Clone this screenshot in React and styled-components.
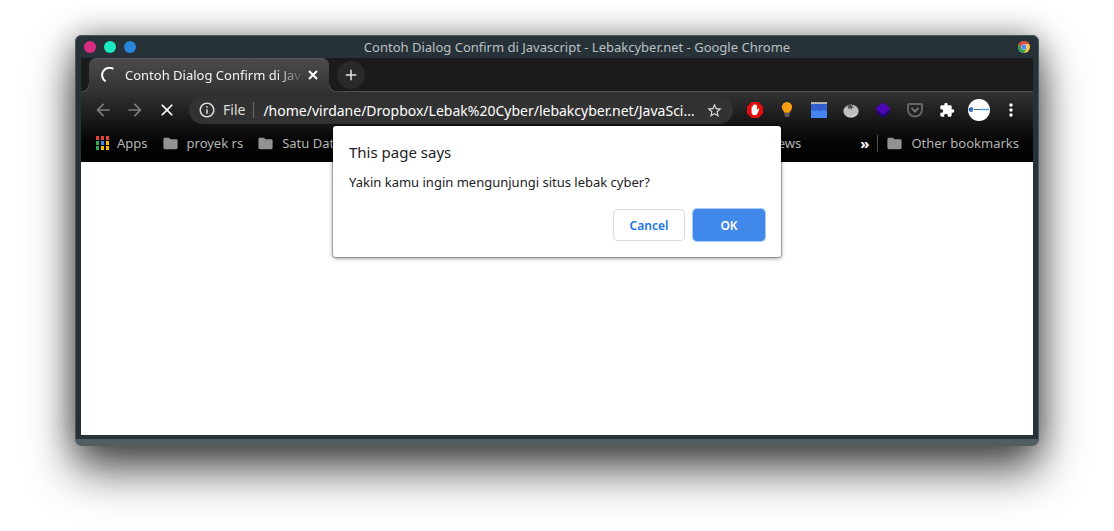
import React from "react";
import styled, { createGlobalStyle } from "styled-components";
import {
  MdArrowBack,
  MdArrowForward,
  MdClose,
  MdAdd,
  MdInfoOutline,
  MdStarBorder,
  MdExtension,
  MdMoreVert,
  MdFolder,
} from "react-icons/md";

const appDots = [
  "#ea4335", "#ea4335", "#ea4335",
  "#34a853", "#4285f4", "#fbbc05",
  "#34a853", "#fbbc05", "#fbbc05",
];

function AppsIcon() {
  return (
    <svg width="14" height="14" viewBox="0 0 14 14">
      {appDots.map((color, i) => (
        <rect
          key={i}
          x={(i % 3) * 5 + 1}
          y={Math.floor(i / 3) * 5}
          width="3"
          height="4"
          fill={color}
        />
      ))}
    </svg>
  );
}

function ChromeLogo() {
  return (
    <svg width="12" height="12" viewBox="0 0 24 24">
      <circle cx="12" cy="12" r="12" fill="#fbc34a" />
      <path d="M12 12 1.6 6A12 12 0 0 0 12 24l5.2-9z" fill="#2f9e58" />
      <path d="M1.6 6A12 12 0 0 1 22.4 6H12l-5.2 9z" fill="#dd4b3e" />
      <circle cx="12" cy="12" r="5.6" fill="#e6eefc" />
      <circle cx="12" cy="12" r="4.8" fill="#4a8af4" />
    </svg>
  );
}

function Spinner() {
  return (
    <svg width="16" height="16" viewBox="0 0 16 16" fill="none">
      <path
        d="M13.300 1.800A6.800 6.800 0 0 0 5.600 14.300"
        stroke="#fff"
        strokeWidth="2"
      />
    </svg>
  );
}

function TabCloseIcon() {
  return (
    <svg width="14" height="14" viewBox="0 0 14 14">
      <path d="m3 3 8 8m0-8-8 8" stroke="#fff" strokeWidth="2" />
    </svg>
  );
}

function BlockerIcon() {
  return (
    <svg width="16" height="16" viewBox="0 0 16 16">
      <path d="M4.7 0h6.6L16 4.7v6.6L11.3 16H4.7L0 11.3V4.7z" fill="#e40d0d" />
      <path
        d="M4.6 9V5.2c0-1 1.3-1 1.3 0V3.6c0-1 1.4-1 1.4 0V3c0-1 1.4-1 1.4 0v.8c0-1 1.4-.9 1.4 0v4.4l.8-1.3c.6-.7 1.5-.3 1.2.5l-1.7 4.2c-.5 1.2-1.2 1.700-2.600 1.700-2 0-3.200-1.300-3.200-3z"
        fill="#fff"
      />
    </svg>
  );
}

function BulbIcon() {
  return (
    <svg width="16" height="16" viewBox="0 0 16 16">
      <path
        d="M8 0a5.2 5.2 0 0 0-5.2 5.3c0 2.4 2.2 3.6 2.6 5.4h5.2c.4-1.8 2.6-3 2.6-5.4A5.2 5.2 0 0 0 8 0z"
        fill="#f79d13"
      />
      <path d="M5.5 11h5v2.6L9.5 15h-3l-1-1.4z" fill="#5c5c5c" />
    </svg>
  );
}

function NotesIcon() {
  return (
    <svg width="16" height="16" viewBox="0 0 16 16">
      <path fill="#4384f0" d="M0 2h16v14H0z" />
      <path fill="#315fd0" d="M0 2h16v7l-3-1-3 1-4-1-3 1-3-1z" />
      <path fill="#b9b9b4" d="M0 0h16v2H0z" />
      <path d="M1 .5h14" stroke="#9a9a94" strokeDasharray="1 1" />
      <path d="M3 12h2m2 2h2m3-2h2" stroke="#4f8ff6" />
    </svg>
  );
}

function TomatoIcon() {
  return (
    <svg width="16" height="16" viewBox="0 0 16 16">
      <ellipse cx="8" cy="9.200" rx="7.600" ry="6.600" fill="#bdbdbd" />
      <path d="M2.500 8c1-2 2-2.600 3.500-2.800M4 13.600c3 1.500 7 1 9-1" stroke="#dedede" fill="none" />
      <path
        d="m7.200 0 .8 3.800 2.400-1-1.200 1.900 2.600.9-2.900.2-.3 2.200-1.400-1.900-2.400 1.500.7-2-2.700-.6 2.800-.8-1.400-2 2.300 1.200z"
        fill="#4a4a4a"
      />
    </svg>
  );
}

function LayersIcon() {
  return (
    <svg width="16" height="16" viewBox="0 0 16 16">
      <path d="m0 10 8-5 8 5-8 6z" fill="#23056f" />
      <path d="m0 6.5 8-6 8 6-8 6.5z" fill="#4a08b5" />
    </svg>
  );
}

function PocketIcon() {
  return (
    <svg width="16" height="16" viewBox="0 0 16 16" fill="none" strokeWidth="2">
      <path
        d="M2 2h12q1 0 1 1v4.500a7 7 0 0 1-14 0V3q0-1 1-1z"
        stroke="#656565"
      />
      <path d="m4.500 6 3.500 3.500L11.500 6" stroke="#737373" />
    </svg>
  );
}

function AvatarIcon() {
  return (
    <svg width="22" height="22" viewBox="0 0 22 22">
      <circle cx="11" cy="11" r="11" fill="#fff" />
      <path
        d="M4.600 11.800a2 1.600 0 1 1 .2-2.200M1.500 10.500H5"
        stroke="#1f5fae"
        strokeWidth="1.300"
        fill="none"
      />
      <path d="M6 10.500h6" stroke="#5a6680" strokeWidth="1" />
      <path d="M12 10.500h9" stroke="#4b9fe0" strokeWidth="1.400" />
    </svg>
  );
}

const extensions = [
  { name: "Ad blocker", icon: <BlockerIcon /> },
  { name: "Lamp", icon: <BulbIcon /> },
  { name: "Notes", icon: <NotesIcon /> },
  { name: "Timer", icon: <TomatoIcon /> },
  { name: "Layers", icon: <LayersIcon /> },
  { name: "Pocket", icon: <PocketIcon /> },
  { name: "Extensions", icon: <MdExtension size={16} /> },
  { name: "Profile", icon: <AvatarIcon /> },
  { name: "Menu", icon: <MdMoreVert size={20} /> },
];

export default function App() {
  return (
    <>
      <GlobalStyle />
      <Desktop>
        <Window>
          <TitleBar>
            <WindowDots>
              <Dot aria-label="Close" $color="#d82c82" />
              <Dot aria-label="Minimize" $color="#1de9c0" />
              <Dot aria-label="Maximize" $color="#2985dc" />
            </WindowDots>
            <Title>
              Contoh Dialog Confirm di Javascript - Lebakcyber.net - Google
              Chrome
            </Title>
            <ChromeLogo />
          </TitleBar>
          <Browser>
            <TabStrip>
              <Tab>
                <Spinner />
                <TabTitle>Contoh Dialog Confirm di Javascript</TabTitle>
                <TabClose aria-label="Close tab">
                  <TabCloseIcon />
                </TabClose>
              </Tab>
              <NewTab aria-label="New tab">
                <MdAdd size={18} />
              </NewTab>
            </TabStrip>
            <Chrome>
              <Toolbar>
                <ToolButton aria-label="Back" $muted>
                  <MdArrowBack size={20} />
                </ToolButton>
                <ToolButton aria-label="Forward" $muted>
                  <MdArrowForward size={20} />
                </ToolButton>
                <ToolButton aria-label="Stop">
                  <MdClose size={20} />
                </ToolButton>
                <AddressBar>
                  <MdInfoOutline size={18} />
                  <Scheme htmlFor="address">File</Scheme>
                  <Address
                    id="address"
                    readOnly
                    value="/home/virdane/Dropbox/Lebak%20Cyber/lebakcyber.net/JavaSci…"
                  />
                  <MdStarBorder size={17} />
                </AddressBar>
                {extensions.map((item) => (
                  <ToolButton key={item.name} aria-label={item.name}>
                    {item.icon}
                  </ToolButton>
                ))}
              </Toolbar>
              <Bookmarks>
                <Bookmark href="#">
                  <AppsIcon />
                  Apps
                </Bookmark>
                <Bookmark href="#">
                  <MdFolder size={17} />
                  proyek rs
                </Bookmark>
                <Bookmark href="#">
                  <MdFolder size={17} />
                  Satu Data
                </Bookmark>
                <Spacer />
                <Bookmark href="#">News</Bookmark>
                <More aria-label="More bookmarks">»</More>
                <OtherBookmarks>
                  <Bookmark href="#">
                    <MdFolder size={17} />
                    Other bookmarks
                  </Bookmark>
                </OtherBookmarks>
              </Bookmarks>
            </Chrome>
            <Page />
            <Dialog role="dialog" aria-labelledby="dialog-title">
              <DialogTitle id="dialog-title">This page says</DialogTitle>
              <Message>Yakin kamu ingin mengunjungi situs lebak cyber?</Message>
              <Actions>
                <DialogButton>Cancel</DialogButton>
                <DialogButton $primary>OK</DialogButton>
              </Actions>
            </Dialog>
          </Browser>
        </Window>
      </Desktop>
    </>
  );
}

const GlobalStyle = createGlobalStyle`
  * {
    box-sizing: border-box;
  }
  body {
    margin: 0;
    background: #fff;
    font-family: "Noto Sans", "Open Sans", sans-serif;
    font-size: 13px;
  }
  button {
    padding: 0;
    border: 0;
    background: none;
    font-family: inherit;
  }
  svg {
    flex-shrink: 0;
  }
`;

const Desktop = styled.div`
  display: flex;
  min-height: 100vh;
  padding: 35px 75px 85px;
`;
const Window = styled.div`
  display: flex;
  flex: 1;
  flex-direction: column;
  min-width: 0;
  padding: 0 6px 4px;
  background: #263238;
  border-bottom: 7px solid #525d61;
  border-radius: 7px;
  box-shadow: inset 0 1px #4a5759, inset 1px 0 #4a5759, inset -1px 0 #4a5759,
    0 24px 46px rgba(0, 0, 0, 0.68), 0 0 30px rgba(0, 0, 0, 0.36);
`;
const TitleBar = styled.div`
  display: flex;
  align-items: center;
  height: 23px;
  padding: 1px 3px 0;
`;
const WindowDots = styled.div`
  display: flex;
  gap: 8px;
`;
const Dot = styled.button`
  width: 12px;
  height: 12px;
  border-radius: 50%;
  background: ${(props) => props.$color};
`;
const Title = styled.div`
  flex: 1;
  color: #bcc0c2;
  line-height: 20px;
  text-align: center;
  white-space: nowrap;
`;
const Browser = styled.div`
  position: relative;
  display: flex;
  flex: 1;
  flex-direction: column;
`;
const TabStrip = styled.div`
  display: flex;
  height: 34px;
  padding: 0 8px;
  background: #1b1b1b;
  box-shadow: inset 0 -1px #505050;
`;
const Tab = styled.div`
  position: relative;
  display: flex;
  align-items: center;
  width: 240px;
  padding: 0 9px 0 11px;
  background: linear-gradient(#4c4c4c, #323232);
  border-radius: 8px 8px 0 0;
  box-shadow: inset 0 1px #555;
  &::before,
  &::after {
    content: "";
    position: absolute;
    bottom: 0;
    width: 8px;
    height: 8px;
  }
  &::before {
    left: -8px;
    background: radial-gradient(circle at 0 0, #1b1b1b 7px, #505050 8px, #333 9px);
  }
  &::after {
    right: -8px;
    background: radial-gradient(circle at 8px 0, #1b1b1b 7px, #505050 8px, #333 9px);
  }
`;
const TabTitle = styled.div`
  flex: 1;
  min-width: 0;
  margin: 0 2px 0 9px;
  overflow: hidden;
  color: #f4f4f4;
  white-space: nowrap;
  mask-image: linear-gradient(to right, #000 85%, transparent);
`;
const TabClose = styled.button`
  display: flex;
`;
const NewTab = styled.button`
  display: flex;
  align-items: center;
  justify-content: center;
  width: 28px;
  height: 28px;
  margin: 3px 0 0 8px;
  border-radius: 50%;
  background: #292929;
  color: #e4e4e4;
`;
const Chrome = styled.div`
  background: linear-gradient(#323232, #050505 50px, #000);
`;
const Toolbar = styled.div`
  display: flex;
  align-items: center;
  height: 36px;
  padding: 0 6px;
`;
const ToolButton = styled.button`
  display: flex;
  align-items: center;
  justify-content: center;
  width: 32px;
  height: 28px;
  color: ${(props) => (props.$muted ? "#7c7c7c" : "#fff")};
`;
const AddressBar = styled.div`
  display: flex;
  flex: 1;
  align-items: center;
  height: 28px;
  min-width: 0;
  margin: 0 6px;
  padding: 0 10px 0 9px;
  border-radius: 14px;
  background: #323232;
  color: #dedede;
  font-size: 14px;
`;
const Scheme = styled.label`
  margin-left: 7px;
  padding-right: 8px;
  border-right: 1px solid #6c6c6c;
  line-height: 16px;
`;
const Address = styled.input`
  flex: 1;
  min-width: 0;
  padding: 0 0 0 9px;
  border: 0;
  outline: 0;
  background: none;
  color: #fff;
  font-family: inherit;
  font-size: 14px;
  text-overflow: ellipsis;
`;
const Bookmarks = styled.div`
  display: flex;
  align-items: center;
  height: 34px;
  padding: 0 14px 4px;
`;
const Bookmark = styled.a`
  display: flex;
  align-items: center;
  gap: 8px;
  margin-right: 14px;
  color: #b4b4b4;
  text-decoration: none;
  white-space: nowrap;
  svg {
    color: #929292;
  }
`;
const Spacer = styled.div`
  flex: 1;
`;
const More = styled.button`
  margin: 0 8px 0 45px;
  color: #fff;
  font-size: 15px;
  font-weight: 700;
  line-height: 16px;
`;
const OtherBookmarks = styled.div`
  padding-left: 8px;
  border-left: 1px solid #4e4e4e;
  line-height: 16px;
  ${Bookmark} {
    margin-right: 0;
  }
`;
const Page = styled.div`
  flex: 1;
  background: #fff;
`;
const Dialog = styled.div`
  position: absolute;
  top: 68px;
  left: 50%;
  width: 448px;
  padding: 16px;
  transform: translateX(-50%);
  border-radius: 3px;
  background: #fff;
  box-shadow: 0 0 0 1px rgba(0, 0, 0, 0.2), 0 1px 4px rgba(0, 0, 0, 0.5);
  color: #202124;
`;
const DialogTitle = styled.div`
  font-size: 15px;
  line-height: 20px;
`;
const Message = styled.div`
  margin-top: 10px;
  font-size: 13px;
  line-height: 20px;
`;
const Actions = styled.div`
  display: flex;
  justify-content: flex-end;
  gap: 8px;
  margin-top: 17px;
`;
const DialogButton = styled.button`
  width: 72px;
  height: 32px;
  border: 1px solid ${(props) => (props.$primary ? "#4088ea" : "#dadce0")};
  border-radius: 4px;
  background: ${(props) => (props.$primary ? "#4088ea" : "#fff")};
  box-shadow: ${(props) => (props.$primary ? "0 0 0 1px #a6cbfa" : "none")};
  color: ${(props) => (props.$primary ? "#fff" : "#1a73e8")};
  font-size: 12px;
  font-weight: 600;
`;
